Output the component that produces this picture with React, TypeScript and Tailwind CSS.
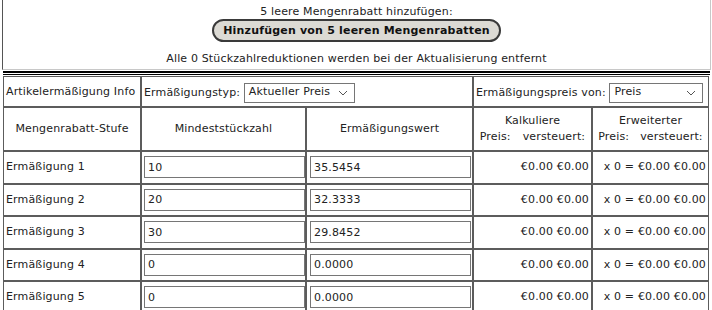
import React from 'react';

const rows = [
  { name: 'Ermäßigung 1', qty: '10', value: '35.5454' },
  { name: 'Ermäßigung 2', qty: '20', value: '32.3333' },
  { name: 'Ermäßigung 3', qty: '30', value: '29.8452' },
  { name: 'Ermäßigung 4', qty: '0', value: '0.0000' },
  { name: 'Ermäßigung 5', qty: '0', value: '0.0000' },
];

function Chevron() {
  return (
    <svg width="10" height="6" viewBox="0 0 10 6" fill="none" className="shrink-0">
      <path d="M1 1l4 4 4-4" stroke="#555" strokeWidth="1" />
    </svg>
  );
}

function FakeSelect({ label, width }: { label: string; width: string }) {
  return (
    <span className={`inline-flex items-center justify-between h-[20px] border border-[#767676] bg-white pl-[4px] pr-[6px] align-middle ${width}`}>
      <span>{label}</span>
      <Chevron />
    </span>
  );
}

const cell = 'border border-[#5c5c5c] px-[2px] whitespace-nowrap';

export default function App() {
  return (
    <div className="w-[712px] h-[310px] overflow-hidden bg-white text-[11px] tracking-[0.15px] text-[#222] font-['DejaVu_Sans','Verdana',sans-serif] pl-[2px]">
      {/* Aktionen */}
      <div className="w-[709px] h-[70px] border-l border-l-[#555] border-r border-r-[#c8c8c8] border-b border-b-[#c8c8c8] flex flex-col items-center pt-[5px]">
        <div className="leading-[14px]">5 leere Mengenrabatt hinzufügen:</div>
        <button className="h-[23px] px-[9px] rounded-[12px] border-2 border-[#3a3a3a] bg-[#dcdad4] font-bold text-[#111] leading-[16px] tracking-[0.2px]">
          Hinzufügen von 5 leeren Mengenrabatten
        </button>
        <div className="mt-[10px] leading-[14px]">Alle 0 Stückzahlreduktionen werden bei der Aktualisierung entfernt</div>
      </div>
      <div className="w-[707px] ml-[1px] mt-[1px] h-[4px] border-t-2 border-t-black border-b border-b-black" />

      <table className="ml-[1px] mt-[1px] w-[706px] border-separate border-spacing-0 table-fixed">
        <colgroup>
          <col className="w-[138px]" />
          <col className="w-[165px]" />
          <col className="w-[167px]" />
          <col className="w-[119px]" />
          <col className="w-[117px]" />
        </colgroup>
        <tbody>
          <tr className="h-[31px]">
            <td className={`${cell} pt-[2px]`}>Artikelermäßigung Info</td>
            <td className={`${cell} pt-[2px]`} colSpan={2}>
              Ermäßigungstyp: <FakeSelect label="Aktueller Preis" width="w-[111px]" />
            </td>
            <td className={`${cell} pt-[2px]`} colSpan={2}>
              Ermäßigungspreis von: <FakeSelect label="Preis" width="w-[94px]" />
            </td>
          </tr>
          <tr className="h-[44px]">
            <td className={`${cell} text-center`}>Mengenrabatt-Stufe</td>
            <td className={`${cell} text-center`}>Mindeststückzahl</td>
            <td className={`${cell} text-center`}>Ermäßigungswert</td>
            <td className={`${cell} text-center leading-[16px]`}>
              <div>Kalkuliere</div>
              <div className="flex justify-center gap-[12px]">
                <span>Preis:</span>
                <span>versteuert:</span>
              </div>
            </td>
            <td className={`${cell} text-center leading-[16px]`}>
              <div>Erweiterter</div>
              <div className="flex justify-center gap-[11px]">
                <span>Preis:</span>
                <span>versteuert:</span>
              </div>
            </td>
          </tr>
          {rows.map((r) => (
            <tr key={r.name} className="h-[32.5px]">
              <td className={cell}>{r.name}</td>
              <td className={cell}>
                <input
                  readOnly
                  value={r.qty}
                  className="block w-[161px] h-[22px] border border-[#767676] px-[3px] text-[11px] tracking-[0.15px] text-[#222] outline-none"
                />
              </td>
              <td className={cell}>
                <input
                  readOnly
                  value={r.value}
                  className="block w-[161px] ml-[1px] h-[22px] border border-[#767676] px-[3px] text-[11px] tracking-[0.15px] text-[#222] outline-none"
                />
              </td>
              <td className={`${cell} text-right`}>€0.00 €0.00</td>
              <td className={`${cell} text-right`}>x 0 = €0.00 €0.00</td>
            </tr>
          ))}
        </tbody>
      </table>
    </div>
  );
}
